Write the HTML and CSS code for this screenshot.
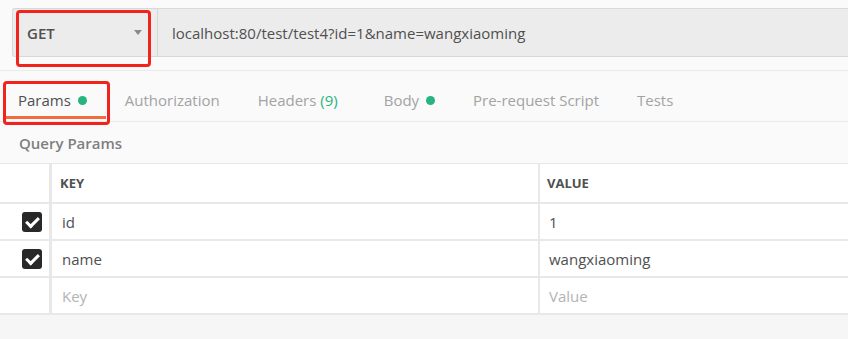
FILE: index.html
```html
<!DOCTYPE html>
<html lang="en">
<head>
    <meta charset="UTF-8">
    <title>Request</title>
    <link rel="stylesheet" href="styles.css">
</head>
<body>
    <div class="request">
        <div class="url-bar">
            <div class="method">
                <span>GET</span>
                <span class="caret"></span>
            </div>
            <div class="url">localhost:80/test/test4?id=1&amp;name=wangxiaoming</div>
        </div>
        <div class="mark mark-get"></div>
    </div>

    <div class="tabs">
        <div class="tab active">Params <span class="dot"></span></div>
        <div class="tab">Authorization</div>
        <div class="tab">Headers <span class="count">(9)</span></div>
        <div class="tab body-tab">Body <span class="dot"></span></div>
        <div class="tab">Pre-request Script</div>
        <div class="tab">Tests</div>
        <div class="mark mark-params"></div>
    </div>

    <div class="section-title">Query Params</div>

    <div class="params">
        <div class="row head">
            <div class="check-cell"></div>
            <div class="cell key">KEY</div>
            <div class="cell value">VALUE</div>
        </div>
        <div class="row">
            <div class="check-cell"><span class="checkbox"></span></div>
            <div class="cell key">id</div>
            <div class="cell value">1</div>
        </div>
        <div class="row">
            <div class="check-cell"><span class="checkbox"></span></div>
            <div class="cell key">name</div>
            <div class="cell value">wangxiaoming</div>
        </div>
        <div class="row">
            <div class="check-cell"></div>
            <div class="cell key placeholder">Key</div>
            <div class="cell value placeholder">Value</div>
        </div>
    </div>
    <div class="footer"></div>
</body>
</html>
```

FILE: styles.css
```css
body {
    margin: 0;
    background: #fafafa;
    font-family: "Open Sans", "Liberation Sans", sans-serif;
    font-size: 15px;
    color: #505050;
}
.request {
    position: relative;
    padding: 8px 0 13px 12px;
    border-bottom: 1px solid #ebebeb;
}
.url-bar {
    display: flex;
    height: 47px;
    border: 1px solid #d9d9d9;
    border-right: none;
    border-radius: 3px 0 0 3px;
    background: #ececec;
}
.method {
    width: 145px;
    box-sizing: border-box;
    display: flex;
    align-items: center;
    justify-content: space-between;
    padding: 0 15px 0 14px;
    border-right: 1px solid #d6d6d6;
    font-weight: 600;
}
.caret {
    width: 0;
    height: 0;
    border-left: 4px solid transparent;
    border-right: 4px solid transparent;
    border-top: 5px solid #8a8a8a;
}
.url {
    display: flex;
    align-items: center;
    padding-left: 14px;
}
.mark {
    position: absolute;
    border: 3px solid #f2221c;
    border-radius: 4px;
}
.mark-get {
    left: 16px;
    top: 10px;
    width: 129px;
    height: 51px;
}
.mark-params {
    left: 3px;
    top: 10px;
    width: 101px;
    height: 38px;
}
.tabs {
    position: relative;
    display: flex;
    gap: 12px;
    padding-left: 5px;
    height: 50px;
    border-bottom: 1px solid #ebebeb;
}
.tab {
    position: relative;
    box-sizing: border-box;
    height: 48px;
    display: flex;
    align-items: center;
    padding: 13px 13px 3px;
    color: #a3a3a3;
    white-space: pre;
}
.tab.active {
    color: #505050;
}
.tab.active::after {
    content: "";
    position: absolute;
    left: 0;
    right: -6px;
    bottom: 0;
    height: 3px;
    background: #f26b3a;
}
.body-tab {
    margin-left: 8px;
}
.dot {
    width: 9px;
    height: 9px;
    margin-left: 3px;
    border-radius: 50%;
    background: #26b47f;
}
.count {
    color: #26b47f;
}
.section-title {
    height: 41px;
    display: flex;
    align-items: center;
    padding-left: 19px;
    font-weight: 600;
    color: #7f7f7f;
}
.params {
    background: #fff;
    border-top: 1px solid #e8e8e8;
}
.row {
    display: grid;
    grid-template-columns: 52px 488px 1fr;
    height: 35px;
    border-bottom: 2px solid #e8e8e8;
}
.row.head {
    height: 38px;
}
.check-cell {
    display: flex;
    align-items: center;
    justify-content: flex-end;
    padding-right: 7px;
    border-right: 3px solid #e8e8e8;
}
.checkbox {
    position: relative;
    width: 20px;
    height: 20px;
    border-radius: 3px;
    background: #282828;
}
.checkbox::after {
    content: "";
    position: absolute;
    left: 4px;
    top: 5px;
    width: 10px;
    height: 5px;
    border-left: 3px solid #fff;
    border-bottom: 3px solid #fff;
    transform: rotate(-45deg);
}
.cell {
    display: flex;
    align-items: center;
    padding-left: 10px;
}
.cell.key {
    border-right: 2px solid #e8e8e8;
}
.cell.value {
    padding-left: 9px;
}
.head .cell {
    font-size: 13px;
    font-weight: 700;
    padding-left: 8px;
}
.head .cell.value {
    padding-left: 7px;
}
.placeholder {
    color: #b3b3b3;
}
.footer {
    height: 30px;
    background: #f6f6f6;
}
```
